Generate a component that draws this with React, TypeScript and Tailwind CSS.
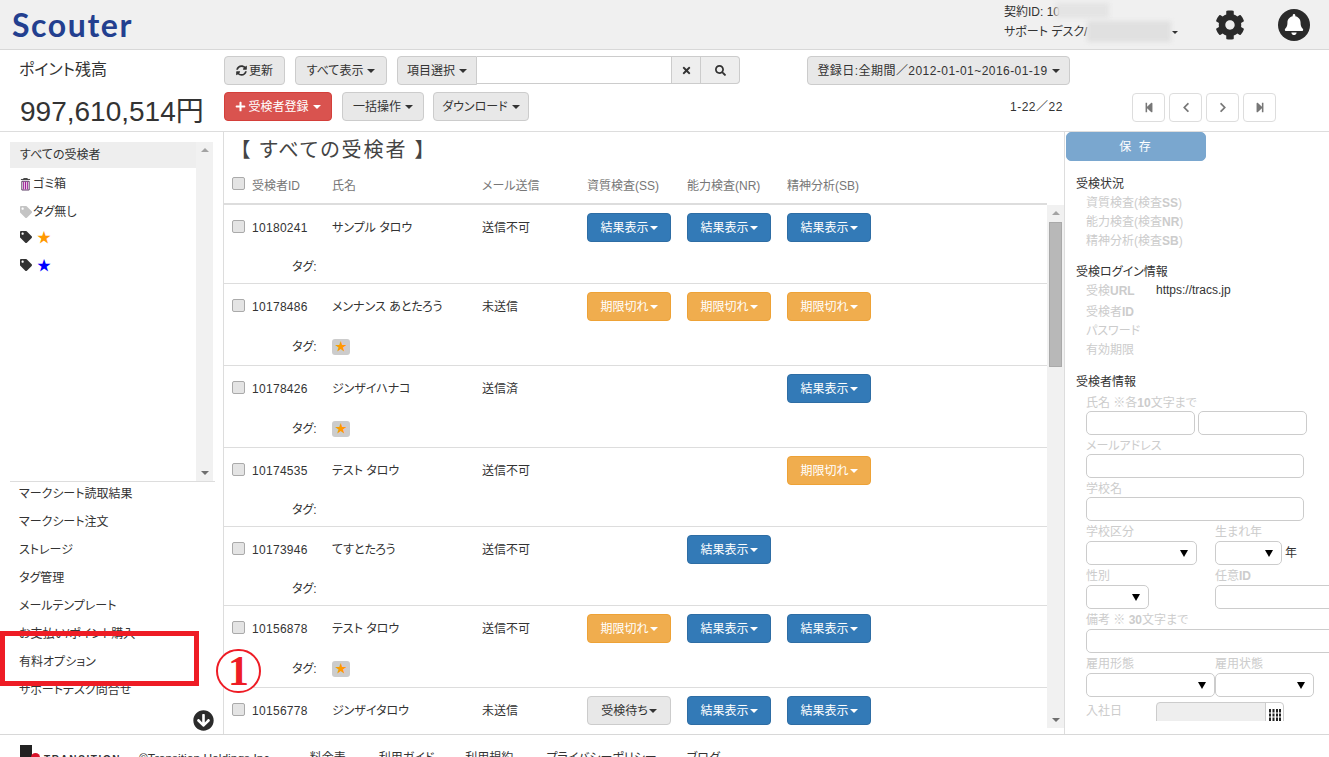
import type { ReactNode } from "react";
import {
  FaArrowCircleDown,
  FaBell,
  FaChevronLeft,
  FaChevronRight,
  FaCog,
  FaPlus,
  FaSearch,
  FaStepBackward,
  FaStepForward,
  FaSyncAlt,
  FaTag,
  FaTimes,
} from "react-icons/fa";

type Status = "result" | "expired" | "waiting" | null;

interface Examinee {
  id: string;
  name: string;
  mail: string;
  ss: Status;
  nr: Status;
  sb: Status;
  star?: boolean;
}

const EXAMINEES: Examinee[] = [
  { id: "10180241", name: "サンプル タロウ", mail: "送信不可", ss: "result", nr: "result", sb: "result" },
  { id: "10178486", name: "メンナンス あとたろう", mail: "未送信", ss: "expired", nr: "expired", sb: "expired", star: true },
  { id: "10178426", name: "ジンザイハナコ", mail: "送信済", ss: null, nr: null, sb: "result", star: true },
  { id: "10174535", name: "テスト タロウ", mail: "送信不可", ss: null, nr: null, sb: "expired" },
  { id: "10173946", name: "てすとたろう", mail: "送信不可", ss: null, nr: "result", sb: null },
  { id: "10156878", name: "テスト タロウ", mail: "送信不可", ss: "expired", nr: "result", sb: "result", star: true },
  { id: "10156778", name: "ジンザイタロウ", mail: "未送信", ss: "waiting", nr: "result", sb: "result" },
];

const NAV_ITEMS = [
  "マークシート読取結果",
  "マークシート注文",
  "ストレージ",
  "タグ管理",
  "メールテンプレート",
  "お支払い/ポイント購入",
  "有料オプション",
  "サポートデスク問合せ",
];

function Caret({ className = "ml-1" }: { className?: string }) {
  return <span className={`inline-block w-0 h-0 border-x-[4px] border-t-[4px] border-x-transparent border-t-current ${className}`} />;
}

function ToolButton({ className, children }: { className: string; children: ReactNode }) {
  return (
    <button className={`h-[29px] flex items-center justify-center shrink-0 rounded-[4px] border border-[#ccc] bg-[#e8e8e8] text-[12px] text-[#333] ${className}`}>
      {children}
    </button>
  );
}

function StatusButton({ status }: { status: Status }) {
  if (!status) return <div className="w-[100px] shrink-0" />;
  const style = {
    result: "bg-[#337ab7] border-[#2e6da4] text-white",
    expired: "bg-[#f0ad4e] border-[#eea236] text-white",
    waiting: "bg-[#e8e8e8] border-[#ccc] text-[#333]",
  }[status];
  const label = { result: "結果表示", expired: "期限切れ", waiting: "受検待ち" }[status];
  return (
    <div className="w-[100px] shrink-0">
      <button className={`w-[84px] h-[29px] flex items-center justify-center rounded-[4px] border text-[12px] ${style}`}>
        {label}
        <Caret className="ml-px" />
      </button>
    </div>
  );
}

function Scrollbar({ thumb }: { thumb?: boolean }) {
  return (
    <div className="w-[17px] shrink-0 h-full bg-[#f1f1f1] flex flex-col items-center justify-between py-[6px]">
      <span className="w-0 h-0 border-x-[4px] border-b-[4px] border-x-transparent border-b-[#a3a3a3]" />
      {thumb && <div className="w-[13px] h-[145px] mb-auto mt-[7px] bg-[#b8b8b8] border border-[#a9a9a9]" />}
      <span className="w-0 h-0 border-x-[4px] border-t-[4px] border-x-transparent border-t-[#6f6f6f]" />
    </div>
  );
}

function TrashIcon() {
  return (
    <svg viewBox="0 0 12 14" className="w-[11px] h-[13px] mr-[2px]" fill="none">
      <path d="M1 1.5h10M4 1.5V.5h4v1" stroke="#333" strokeWidth="1" />
      <path d="M2 3.5h8v9.5H2z" stroke="#4b2a55" strokeWidth="1" />
      <path d="M4 4v8.5M6 4v8.5M8 4v8.5" stroke="#a0209a" strokeWidth="1.2" />
    </svg>
  );
}

function ExamineeRow({ row }: { row: Examinee }) {
  return (
    <div className={`border-b border-[#ddd] shrink-0 ${row.star ? "h-[82px]" : "h-[79px]"}`}>
      <div className="h-[45px] flex items-center text-[12px] text-[#333]">
        <input type="checkbox" className="appearance-none ml-[8px] mb-[2px] w-[13px] h-[13px] bg-[#e4e4e4] border border-[#aaa] rounded-[2px]" />
        <span className="w-[80px] ml-[7px] tracking-[0.3px]">{row.id}</span>
        <span className="w-[150px]">{row.name}</span>
        <span className="w-[105px]">{row.mail}</span>
        <StatusButton status={row.ss} />
        <StatusButton status={row.nr} />
        <StatusButton status={row.sb} />
      </div>
      <div className={`flex items-center text-[12px] text-[#333] pl-[68px] ${row.star ? "h-[35px]" : "h-[33px]"}`}>
        <span className="w-[40px]">タグ:</span>
        {row.star && (
          <span className="w-[18px] h-[16px] flex items-center justify-center rounded-[3px] bg-[#ccc] text-[#f90] text-[12px]">★</span>
        )}
      </div>
    </div>
  );
}

function SectionTitle({ children, className = "" }: { children: ReactNode; className?: string }) {
  return <div className={`h-[18px] leading-[16px] text-[12px] text-[#333] ml-[11px] ${className}`}>{children}</div>;
}

function Label({ children, className = "h-[19px] leading-[19px]" }: { children: ReactNode; className?: string }) {
  return <div className={`text-[12px] text-[#ccc] whitespace-nowrap ${className}`}>{children}</div>;
}

function FormLabel({ children, className = "h-[19px]" }: { children: ReactNode; className?: string }) {
  return <Label className={`leading-[22px] ${className}`}>{children}</Label>;
}

function TextBox({ className }: { className: string }) {
  return <input className={`block h-[24px] shrink-0 border border-[#ccc] rounded-[5px] bg-white ${className}`} />;
}

function SelectBox({ className }: { className: string }) {
  return (
    <div className={`h-[24px] shrink-0 border border-[#ccc] rounded-[5px] bg-white flex items-center justify-end pr-[8px] ${className}`}>
      <span className="w-0 h-0 border-x-[4px] border-t-[7px] border-x-transparent border-t-black" />
    </div>
  );
}

function DetailPanel() {
  return (
    <div className="flex-1 min-w-0 h-[589px] overflow-hidden">
      <button className="w-[140px] h-[29px] ml-[1px] rounded-[5px] bg-[#7aa7cf] border border-[#7aa7cf] text-white text-[12px] tracking-[2px]">保 存</button>
      <SectionTitle className="mt-[15px]">受検状況</SectionTitle>
      <div className="ml-[21px]">
        <Label>資質検査(検査<b>SS</b>)</Label>
        <Label>能力検査(検査<b>NR</b>)</Label>
        <Label>精神分析(検査<b>SB</b>)</Label>
      </div>
      <SectionTitle className="mt-[13px]">受検ログイン情報</SectionTitle>
      <div className="ml-[21px]">
        <div className="flex">
          <Label className="h-[19px] leading-[19px] w-[70px]">受検<b>URL</b></Label>
          <span className="text-[12px] leading-[17px] text-[#333]">https://tracs.jp</span>
        </div>
        <FormLabel>受検者<b>ID</b></FormLabel>
        <FormLabel>パスワード</FormLabel>
        <FormLabel>有効期限</FormLabel>
      </div>
      <SectionTitle className="mt-[16px]">受検者情報</SectionTitle>
      <div className="ml-[21px]">
        <FormLabel>氏名 ※各<b>10</b>文字まで</FormLabel>
        <div className="flex gap-[3px]">
          <TextBox className="w-[109px]" />
          <TextBox className="w-[109px]" />
        </div>
        <FormLabel>メールアドレス</FormLabel>
        <TextBox className="w-[218px]" />
        <FormLabel>学校名</FormLabel>
        <TextBox className="w-[218px]" />
        <div className="flex">
          <div className="w-[129px] shrink-0">
            <FormLabel className="h-[20px]">学校区分</FormLabel>
            <SelectBox className="w-[111px]" />
          </div>
          <div>
            <FormLabel className="h-[20px]">生まれ年</FormLabel>
            <div className="flex items-center">
              <SelectBox className="w-[67px]" />
              <span className="ml-[3px] text-[12px] text-[#333]">年</span>
            </div>
          </div>
        </div>
        <div className="flex">
          <div className="w-[129px] shrink-0">
            <FormLabel className="h-[20px]">性別</FormLabel>
            <SelectBox className="w-[63px]" />
          </div>
          <div>
            <FormLabel className="h-[20px]">任意<b>ID</b></FormLabel>
            <TextBox className="w-[120px]" />
          </div>
        </div>
        <FormLabel className="h-[20px]">備考 ※ <b>30</b>文字まで</FormLabel>
        <TextBox className="w-[250px]" />
        <div className="flex">
          <div className="w-[129px] shrink-0">
            <FormLabel className="h-[20px]">雇用形態</FormLabel>
            <SelectBox className="w-[129px]" />
          </div>
          <div>
            <FormLabel className="h-[20px]">雇用状態</FormLabel>
            <SelectBox className="w-[99px]" />
          </div>
        </div>
        <div className="flex mt-[5px]">
          <Label className="w-[70px] h-[19px] leading-[19px]">入社日</Label>
          <div className="w-[128px] h-[30px] flex border border-[#ccc] rounded-[4px] bg-[#eee]">
            <div className="flex-1" />
            <div className="w-[18px] bg-white border-l border-[#ccc] rounded-r-[4px] flex justify-center pt-[6px]">
              <svg viewBox="0 0 12 12" className="w-[12px] h-[12px]">
                <path d="M1 0v12M4.5 0v12M8 0v12M11 0v12" stroke="#222" strokeWidth="2" />
                <path d="M0 4h12M0 8h12" stroke="#fff" strokeWidth="1" />
              </svg>
            </div>
          </div>
        </div>
      </div>
    </div>
  );
}

export default function App() {
  return (
    <div className="relative w-[1329px] h-[757px] overflow-hidden bg-white text-[#333] [font-family:'Liberation_Sans','Noto_Sans_CJK_JP',sans-serif] [font-feature-settings:'palt']">
      {/* Header */}
      <header className="h-[50px] bg-[#f0f0f0] border-b border-[#d8d8d8] flex items-center">
        <span className="ml-[12px] text-[32px] font-bold tracking-[1.6px] text-[#233f8f] [font-family:Lato,sans-serif]">Scouter</span>
        <div className="relative ml-auto w-[211px] text-[12px] leading-[20px] text-[#333] mt-[-5px]">
          <div>契約ID: 10</div>
          <div>サポート デスク/</div>
          <div className="absolute left-[52px] top-[1px] w-[53px] h-[15px] bg-[#e4e4e4] blur-[2px]" />
          <div className="absolute left-[83px] top-[19px] w-[84px] h-[21px] bg-[#e0e0e0] blur-[2px]" />
          <span className="absolute left-[168px] top-[29px] w-0 h-0 border-x-[3px] border-t-[3px] border-x-transparent border-t-[#333]" />
        </div>
        <FaCog className="w-[30px] h-[30px] text-[#2b2b2b] mr-[33px]" />
        <div className="w-[32px] h-[32px] rounded-full bg-[#2b2b2b] flex items-center justify-center mr-[19px]">
          <FaBell className="w-[20px] h-[21px] text-white" />
        </div>
      </header>

      {/* Toolbar */}
      <div className="h-[82px] border-b border-[#ddd] flex">
        <div className="w-[224px] shrink-0">
          <div className="ml-[19px] mt-[9px] text-[16px] leading-[22px] text-[#333]">ポイント残高</div>
          <div className="ml-[20px] mt-[14px] text-[28px] leading-[34px] text-[#333] whitespace-nowrap">997,610,514円</div>
        </div>
        <div className="flex-1 pt-[6px]">
          <div className="flex">
            <ToolButton className="w-[61px]">
              <FaSyncAlt className="w-[11px] h-[11px] mr-[2px]" />更新
            </ToolButton>
            <ToolButton className="w-[92px] ml-[10px]">すべて表示<Caret /></ToolButton>
            <ToolButton className="w-[80px] ml-[10px] rounded-r-none">項目選択<Caret /></ToolButton>
            <input className="w-[195px] h-[28px] border border-l-0 border-[#ccc] bg-white" />
            <button className="w-[29px] h-[28px] flex items-center justify-center bg-[#eee] border border-l-0 border-[#ccc]">
              <FaTimes className="w-[11px] h-[11px] text-[#333]" />
            </button>
            <button className="w-[39px] h-[28px] flex items-center justify-center bg-[#eee] border border-l-0 border-[#ccc] rounded-r-[4px]">
              <FaSearch className="w-[11px] h-[11px] text-[#333]" />
            </button>
            <ToolButton className="w-[263px] ml-[67px] tracking-[0.45px]">登録日:全期間／2012-01-01~2016-01-19<Caret /></ToolButton>
          </div>
          <div className="flex items-start mt-[7px]">
            <button className="w-[108px] h-[29px] flex items-center justify-center rounded-[4px] border border-[#d43f3a] bg-[#d9534f] text-[12px] text-white">
              <FaPlus className="w-[11px] h-[11px] mr-[2px]" />受検者登録<Caret />
            </button>
            <ToolButton className="w-[82px] ml-[10px]">一括操作<Caret /></ToolButton>
            <ToolButton className="w-[96px] ml-[9px]">ダウンロード<Caret /></ToolButton>
            <span className="w-[53px] ml-[481px] mt-[6px] text-[12px] tracking-[0.5px] whitespace-nowrap">1-22／22</span>
            <div className="flex gap-[4px] ml-[69px] mt-[1px] text-[#777]">
              {[FaStepBackward, FaChevronLeft, FaChevronRight, FaStepForward].map((Icon, i) => (
                <button key={i} className="w-[33px] h-[29px] flex items-center justify-center rounded-[4px] border border-[#ddd] bg-white">
                  <Icon className="w-[10px] h-[11px]" />
                </button>
              ))}
            </div>
          </div>
        </div>
      </div>

      {/* Body */}
      <div className="h-[603px] border-b border-[#d8d8d8] flex">
        <aside className="w-[224px] shrink-0 border-r border-[#ddd] pt-[10px] pl-[10px]">
          <div className="w-[205px] h-[340px] border-b border-[#ddd] flex">
            <div className="w-[186px] shrink-0 text-[12px] text-[#333]">
              <div className="h-[26px] bg-[#eee] flex items-center pl-[10px]">すべての受検者</div>
              <div className="h-[32px] flex items-center pl-[10px]"><TrashIcon />ゴミ箱</div>
              <div className="h-[24px] flex items-center pl-[10px]"><FaTag className="w-[12px] h-[12px] mr-[1px] text-[#c4c4c4]" />タグ無し</div>
              <div className="h-[26px] flex items-center pl-[10px]">
                <FaTag className="w-[12px] h-[12px] text-[#333] mr-[5px]" /><span className="text-[#f90] text-[14px]">★</span>
              </div>
              <div className="h-[30px] flex items-center pl-[10px]">
                <FaTag className="w-[12px] h-[12px] text-[#333] mr-[5px]" /><span className="text-[#00f] text-[14px]">★</span>
              </div>
            </div>
            <div className="h-[339px]"><Scrollbar /></div>
          </div>
          <nav className="flex flex-col gap-[4px] pl-[9px] text-[12px] leading-[24px] text-[#333]">
            {NAV_ITEMS.map((item) => (
              <div key={item}>{item}</div>
            ))}
          </nav>
        </aside>

        <main className="w-[841px] shrink-0 border-r border-[#ddd]">
          <div className="h-[36px] pl-[16px] text-[20px] leading-[36px] tracking-[2px] text-[#444]">【 すべての受検者 】</div>
          <div className="h-[37px] w-[823px] border-b-[2px] border-[#ddd] flex items-center text-[12px] text-[#777]">
            <input type="checkbox" className="appearance-none ml-[8px] mb-[4px] w-[13px] h-[13px] bg-[#e4e4e4] border border-[#aaa] rounded-[2px]" />
            <span className="w-[80px] ml-[7px]">受検者ID</span>
            <span className="w-[150px]">氏名</span>
            <span className="w-[105px]">メール送信</span>
            <span className="w-[100px]">資質検査(SS)</span>
            <span className="w-[100px]">能力検査(NR)</span>
            <span className="w-[100px]">精神分析(SB)</span>
          </div>
          <div className="flex h-[523px]">
            <div className="w-[823px] shrink-0 overflow-hidden flex flex-col">
              {EXAMINEES.map((row) => (
                <ExamineeRow key={row.id} row={row} />
              ))}
            </div>
            <Scrollbar thumb />
          </div>
        </main>

        <DetailPanel />
      </div>

      {/* Footer */}
      <footer className="flex items-start text-[12px] leading-[14px] text-[#333]">
        <div className="relative ml-[20px] mt-[10px] w-[104px] h-[14px]">
          <div className="absolute left-0 top-0 w-[12px] h-[14px] bg-[#222]" />
          <div className="absolute left-[11px] top-[8px] w-[9px] h-[9px] rounded-full bg-[#d8132a]" />
          <span className="absolute left-[24px] top-[8px] text-[10px] font-bold tracking-[1.6px] whitespace-nowrap">TRANSITION</span>
        </div>
        <span className="ml-[15px] mt-[17px] whitespace-nowrap">©Transition Holdings Inc.</span>
        <span className="ml-[37px] mt-[16px]">料金表</span>
        <span className="ml-[33px] mt-[16px]">利用ガイド</span>
        <span className="ml-[31px] mt-[16px]">利用規約</span>
        <span className="ml-[33px] mt-[16px]">プライバシーポリシー</span>
        <span className="ml-[30px] mt-[16px]">ブログ</span>
      </footer>

      {/* Annotations */}
      <div className="absolute left-0 top-[631px] w-[199px] h-[55px] border-[5px] border-[#ee1c25]" />
      <div className="absolute left-[216px] top-[649px] w-[45px] h-[44px] rounded-full border-2 border-[#ee1c25] bg-white flex items-center justify-center text-[42px] font-bold text-[#ee1c25] [font-family:'Liberation_Serif',serif]">1</div>
      <FaArrowCircleDown className="absolute left-[193px] top-[710px] w-[21px] h-[21px] text-[#2b2b2b]" />
    </div>
  );
}
